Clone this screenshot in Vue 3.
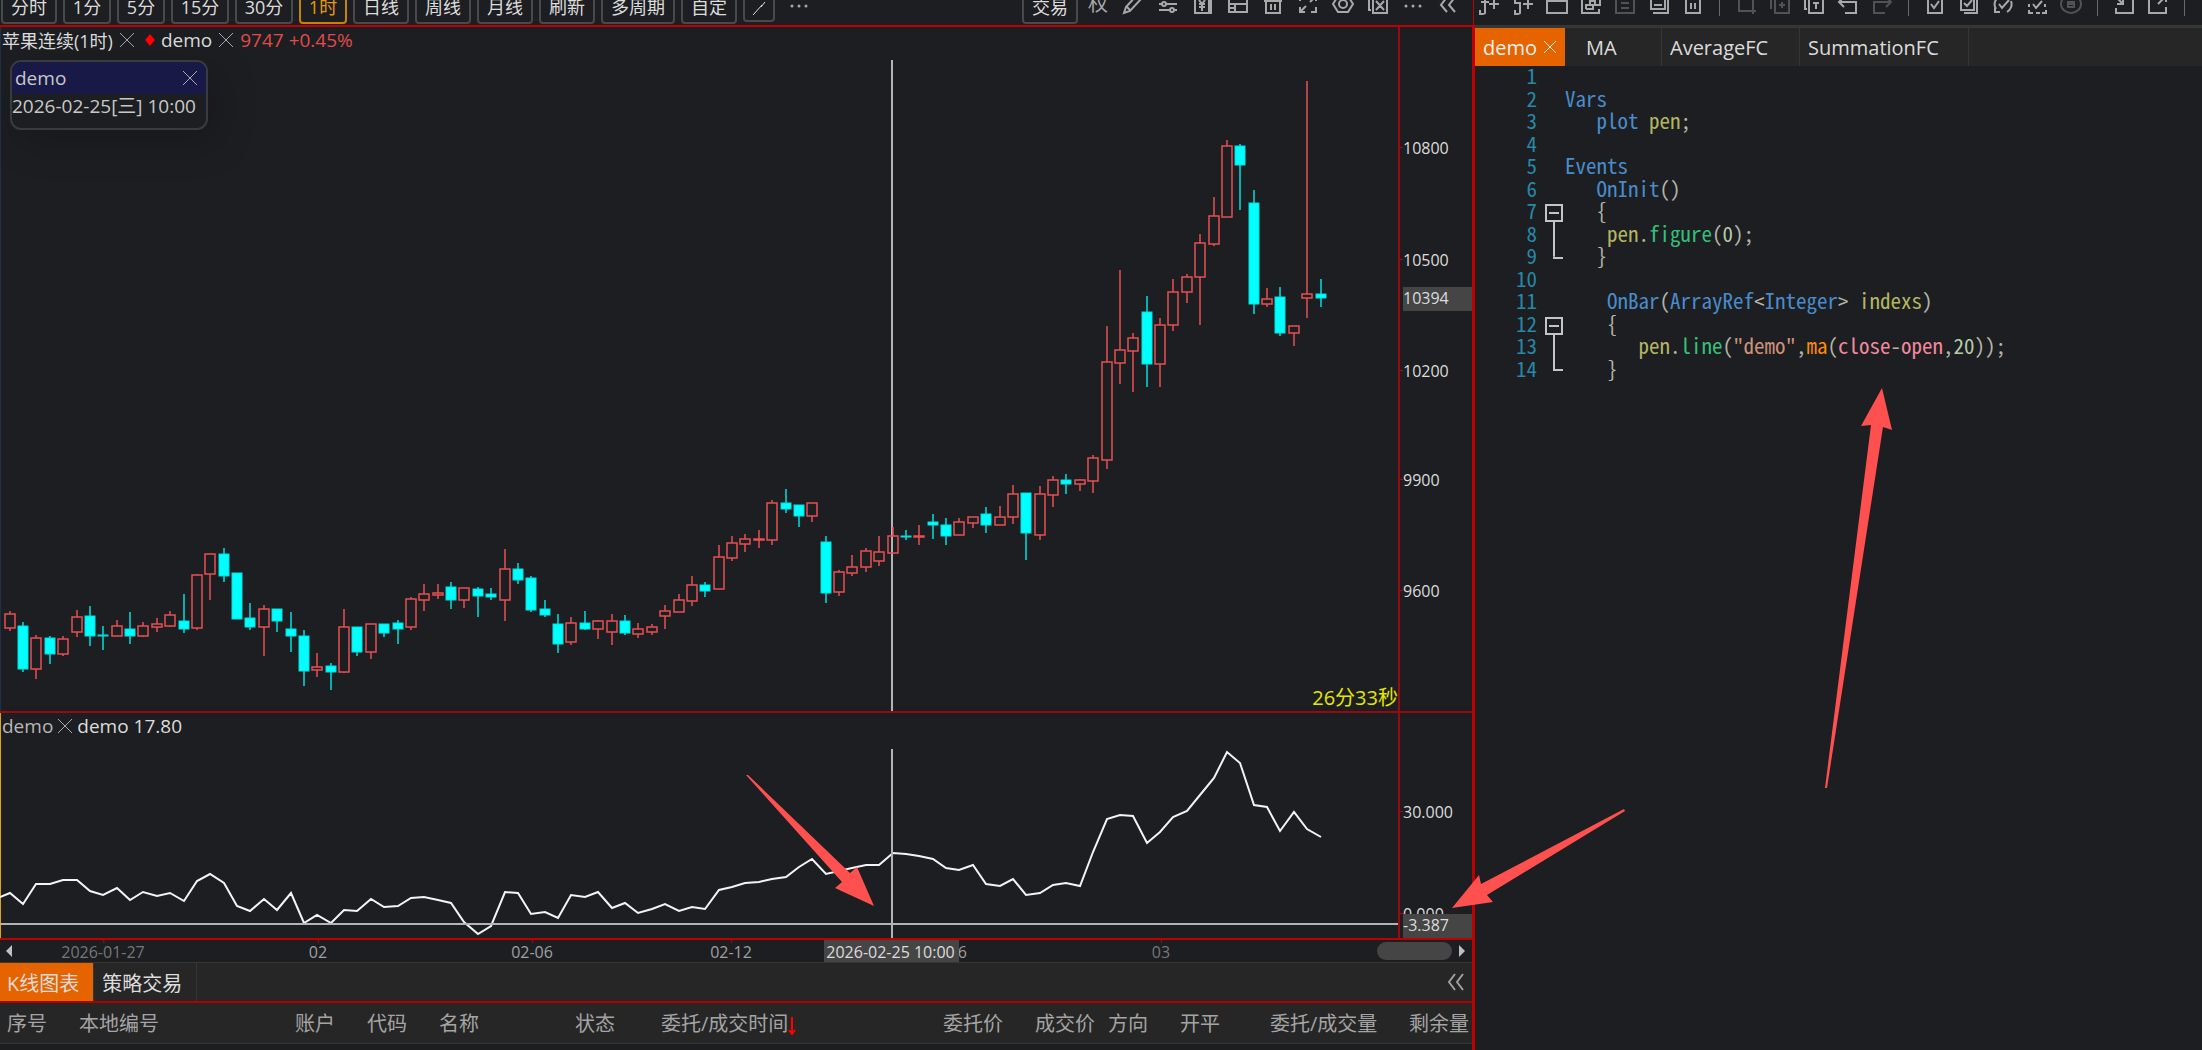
<template>
    <div class="terminal">
        <!-- Левая часть: график и таблица заявок -->
        <main class="left-side">
            <div class="toolbar">
                <div class="toolbar-inner chart-toolbar">
                    <button
                        v-for="item in periods"
                        :key="item"
                        type="button"
                        :class="['period-button', periodSize(item), { active: item === activePeriod }]"
                        @click="activePeriod = item"
                    >{{ item }}</button>
                    <button type="button" class="period-button draw-button" aria-label="画线">
                        <svg width="16" height="16" viewBox="0 0 16 16"><path d="M2 15 11 5M10 7l4-5" /></svg>
                    </button>
                    <button type="button" class="icon-button more-button" aria-label="更多">
                        <svg viewBox="0 0 24 24"><path class="dots" d="M5 14h0M12 14h0M19 14h0" /></svg>
                    </button>
                    <span class="spacer"></span>
                    <button type="button" class="period-button">交易</button>
                    <div class="icon-group">
                        <button type="button" class="icon-button text-icon">权</button>
                        <button v-for="icon in chartIcons" :key="icon.name" type="button" class="icon-button" :aria-label="icon.name">
                            <svg viewBox="0 0 24 24"><path :class="{ dots: icon.dots }" :d="icon.d" /></svg>
                        </button>
                    </div>
                </div>
            </div>

            <div class="left-body">
                <section class="price-pane">
                    <div class="plot">
                        <svg class="plot-svg" viewBox="0 27 1398 684" preserveAspectRatio="none">
                            <path class="cross" d="M892 60V711" />
                            <g v-for="(c, i) in candles" :key="i" :class="c[4] ? 'up' : 'down'">
                                <path class="wick" :d="`M${barX(i)} ${c[0]}V${c[1]}M${barX(i)} ${c[2]}V${c[3]}`" />
                                <rect :x="barX(i) - 5" :y="c[1]" width="10" :height="Math.max(c[2] - c[1], 1)" />
                            </g>
                        </svg>
                        <div class="pane-title">
                            <span class="contract">苹果连续(1时)</span>
                            <button type="button" class="close-button" aria-label="关闭"><svg viewBox="0 0 16 16"><path d="M1 1 15 15M15 1 1 15" /></svg></button>
                            <svg class="diamond" viewBox="0 0 10 12"><path d="M5 0 10 6 5 12 0 6z" /></svg>
                            <span>demo</span>
                            <button type="button" class="close-button" aria-label="关闭"><svg viewBox="0 0 16 16"><path d="M1 1 15 15M15 1 1 15" /></svg></button>
                            <span class="rise">9747 +0.45%</span>
                        </div>
                        <div class="info-box">
                            <div class="info-head">
                                <span>demo</span>
                                <button type="button" class="close-button" aria-label="关闭"><svg viewBox="0 0 16 16"><path d="M1 1 15 15M15 1 1 15" /></svg></button>
                            </div>
                            <div class="info-date">2026-02-25[三] 10:00</div>
                        </div>
                        <span class="countdown">26分33秒</span>
                    </div>
                    <div class="axis">
                        <span v-for="p in priceLabels" :key="p.text" class="axis-label" :style="{ top: p.top + '%' }">{{ p.text }}</span>
                        <span class="axis-mark price-mark">10394</span>
                    </div>
                </section>

                <section class="indicator-pane">
                    <div class="plot">
                        <svg class="plot-svg" viewBox="0 713 1398 225" preserveAspectRatio="none">
                            <polyline class="series" :points="linePoints" />
                            <path class="cross" d="M892 749V938M0 924H1398" />
                        </svg>
                        <div class="pane-title">
                            <span class="muted">demo</span>
                            <button type="button" class="close-button" aria-label="关闭"><svg viewBox="0 0 16 16"><path d="M1 1 15 15M15 1 1 15" /></svg></button>
                            <span>demo 17.80</span>
                        </div>
                    </div>
                    <div class="axis">
                        <span v-for="p in valueLabels" :key="p.text" class="axis-label" :style="{ top: p.top + '%' }">{{ p.text }}</span>
                        <span class="axis-mark value-mark">-3.387</span>
                    </div>
                </section>

                <div class="time-axis">
                    <button type="button" class="scroll-arrow" aria-label="向左"><svg viewBox="0 0 8 12"><path d="M7 0V12L1 6z" /></svg></button>
                    <span
                        v-for="t in timeLabels"
                        :key="t.text"
                        :class="['time-label', { dim: t.dim }]"
                        :style="{ left: t.left + '%' }"
                    >{{ t.text }}</span>
                    <span class="time-mark">2026-02-25 10:00</span>
                    <span class="spacer"></span>
                    <span class="scroll-thumb"></span>
                    <button type="button" class="scroll-arrow" aria-label="向右"><svg viewBox="0 0 8 12"><path d="M1 0V12L7 6z" /></svg></button>
                </div>

                <nav class="bottom-tabs">
                    <button type="button" class="bottom-tab active">K线图表</button>
                    <button type="button" class="bottom-tab">策略交易</button>
                    <span class="spacer"></span>
                    <button type="button" class="fold-button" aria-label="收起">
                        <svg viewBox="0 0 24 24"><path d="M11 4 5 12l6 8M19 4l-6 8 6 8" /></svg>
                    </button>
                </nav>

                <table class="orders">
                    <colgroup>
                        <col v-for="c in columns" :key="c.title" :style="{ width: c.width / 14.72 + '%' }">
                    </colgroup>
                    <thead>
                        <tr>
                            <th v-for="c in columns" :key="c.title" scope="col">
                                {{ c.title }}<svg v-if="c.sorted" class="sort-arrow" viewBox="0 0 8 18"><path d="M4 0V17M1 13l3 4 3-4" /></svg>
                            </th>
                        </tr>
                    </thead>
                </table>
            </div>
        </main>

        <!-- Правая часть: редактор формул -->
        <section class="right-side">
            <div class="toolbar editor-bar">
                <div class="toolbar-inner editor-toolbar">
                    <template v-for="(icon, i) in editorIcons" :key="i">
                        <span v-if="icon.sep" class="separator"></span>
                        <button v-else type="button" :class="['icon-button', { disabled: icon.off }]" :aria-label="icon.name">
                            <svg viewBox="0 0 24 24"><path :d="icon.d" /></svg>
                        </button>
                    </template>
                </div>
            </div>
            <nav class="file-tabs">
                <button type="button" class="file-tab current">
                    demo
                    <svg viewBox="0 0 16 16"><path d="M2 2 14 14M14 2 2 14" /></svg>
                </button>
                <button type="button" class="file-tab short">MA</button>
                <button type="button" class="file-tab average">AverageFC</button>
                <button type="button" class="file-tab summation">SummationFC</button>
            </nav>
            <div class="code">
                <div v-for="(line, i) in codeLines" :key="i" class="code-line">
                    <span class="line-number">{{ i + 1 }}</span>
                    <span :class="['fold', foldClass(i + 1)]"></span>
                    <code><span v-for="(t, j) in line" :key="j" :class="t[0]">{{ t[1] }}</span></code>
                </div>
            </div>
        </section>

        <!-- Стрелки-пометки поверх окна -->
        <svg class="arrows" viewBox="0 0 2202 1050" preserveAspectRatio="none">
            <path d="M746 775 748 775 850 873 857 867 874 906 835 888 842 882z" />
            <path d="M1624 809 1625 811 1487 895 1493 902 1452 908 1479 875 1481 884z" />
            <path d="M1825 788 1871 425 1861 426 1882 388 1892 430 1883 427 1827 788z" />
        </svg>
    </div>
</template>

<script setup>
import { ref, computed } from 'vue';

const activePeriod = ref('1时');
const periods = ['分时', '1分', '5分', '15分', '30分', '1时', '日线', '周线', '月线', '刷新', '多周期', '自定'];

// Ширина кнопки зависит от числа цифр в названии периода
function periodSize(item) {
    const digits = item.replace(/\D/g, '').length;
    return ['', 'one-digit', 'two-digits'][digits];
}

// Иконки панели графика
const chartIcons = [
    { name: '画笔', d: 'M3 21l2-6L16 3l4 4L9 19zM6 15l3 3' },
    { name: '参数', d: 'M3 12h3M10 12h11M3 18h11M18 18h3M6 12a2 2 0 1 0 4 0a2 2 0 1 0-4 0M14 18a2 2 0 1 0 4 0a2 2 0 1 0-4 0M3 6h11M18 6h3' },
    { name: '资金', d: 'M4 4h14v17H4zM8 8l3 4 3-4M11 12v7M8 12h6M8 15h6M20 6v15h-4' },
    { name: '布局', d: 'M3 4h18v16H3zM3 12h18M9 12v8M3 16h6' },
    { name: '删除', d: 'M3 9h18M5 9v12h14V9M10 12v6M14 12v6M9 5h6' },
    { name: '全屏', d: 'M4 9V4h5M15 4h5v5M20 15v5h-5M9 20H4v-5M14 10l5-5M10 14l-5 5' },
    { name: '设置', d: 'M7 4h10l5 8-5 8H7L2 12zM8 12a4 4 0 1 0 8 0a4 4 0 1 0-8 0' },
    { name: '关闭全部', d: 'M7 6h14v15H7zM10 9l8 9M18 9l-8 9M3 3v15h2' },
    { name: '更多', d: 'M5 14h0M12 14h0M19 14h0', dots: true },
    { name: '收起', d: 'M11 5 5 13l6 7M19 5l-6 8 6 7' },
];

// Иконки панели редактора
const editorIcons = [
    { name: '新建函数', d: 'M11 3H8v18c0 1-3 1-5 1v-4M4 10h8M12 12h10M17 7v10' },
    { name: '新建指标', d: 'M4 4v7h5v10c0 1-3 1-5 1v-4M12 12h10M17 7v10' },
    { name: '窗口', d: 'M2 5h20v16H2zM2 9h20' },
    { name: '链接', d: 'M9 6H3v15h17v-4M7 17h7v-4h-3M21 4v9h-5v-4h-5v4h-4v4' },
    { name: '文档', d: 'M3 4h18v17H3zM8 11h8M8 16h8', off: true },
    { name: '保存全部', d: 'M4 4h14v13H4zM7 13h8M21 4v17H6' },
    { name: '删除', d: 'M3 6h18M5 6v15h14V6M10 11v6M14 11v6' },
    { sep: true },
    { name: '选区', d: 'M5 3v16h17M19 22V5H3', off: true },
    { name: '添加', d: 'M7 5h14v16H7zM11 13h6M14 10v6M3 3v14', off: true },
    { name: '文本', d: 'M7 6h14v15H7zM11 11h6M14 11v6M3 3v14h2' },
    { name: '撤销', d: 'M4 10h16v11H9M8 5l-5 5 5 5' },
    { name: '重做', d: 'M20 10H4v11h11M16 5l5 5-5 5', off: true },
    { sep: true },
    { name: '检查', d: 'M5 4h14v17H5zM8 12l3 4 5-7' },
    { name: '检查全部', d: 'M4 4h13v14H4zM7 11l3 3 5-6M20 4v17H7' },
    { name: '编译', d: 'M9 20H4v-4M5 17a9 9 0 0 1 11-13M16 20a9 9 0 0 0 4-11M8 12l3 4 7-8' },
    { name: '部分检查', d: 'M4 8V4h4M16 4h4v4M4 12v3M20 12v3M4 18v3h4M11 21h4M17 21h4v-3M8 12l3 4 6-7' },
    { name: '停止', d: 'M2 12a10 9 0 1 0 20 0a10 9 0 1 0-20 0M9 10h6v5H9zM10 12h4', off: true },
    { sep: true },
    { name: '导入', d: 'M11 4h10v17H4v-5M3 4l8 8M11 6v6H5' },
    { name: '导出', d: 'M12 4H3v17h17v-6M12 12l8-8M14 4h6v6' },
    { sep: true },
];

// Свечи: [максимум, верх тела, низ тела, минимум, рост]
const candles = [
    [611, 614, 628, 631, 1], [622, 626, 669, 672, 0], [635, 638, 669, 679, 1], [636, 638, 654, 664, 0], [636, 639, 654, 656, 1],
    [610, 617, 632, 637, 1], [606, 616, 636, 646, 0], [626, 635, 636, 650, 0], [620, 626, 636, 636, 1], [612, 629, 636, 644, 0],
    [622, 626, 636, 637, 1], [618, 624, 627, 632, 1], [611, 615, 626, 627, 1], [594, 621, 629, 633, 0], [574, 575, 628, 630, 1],
    [554, 554, 574, 600, 1], [548, 554, 576, 582, 0], [573, 573, 619, 619, 0], [603, 618, 627, 630, 0], [605, 609, 627, 656, 1],
    [609, 609, 621, 632, 0], [612, 629, 636, 652, 0], [630, 636, 671, 686, 0], [653, 667, 670, 677, 1], [663, 666, 672, 690, 0],
    [609, 627, 672, 673, 1], [627, 627, 652, 656, 0], [624, 624, 652, 659, 1], [624, 624, 633, 637, 0], [620, 623, 629, 644, 0],
    [597, 599, 627, 630, 1], [584, 594, 600, 611, 1], [584, 593, 595, 599, 1], [582, 587, 600, 609, 0], [588, 588, 600, 608, 1],
    [587, 589, 596, 617, 0], [588, 594, 597, 600, 0], [549, 569, 600, 621, 1], [563, 569, 580, 584, 0], [576, 578, 610, 612, 0],
    [600, 609, 615, 617, 0], [614, 624, 644, 653, 0], [617, 623, 642, 645, 1], [611, 623, 629, 630, 0], [620, 621, 629, 639, 1],
    [614, 621, 632, 645, 1], [615, 621, 633, 635, 0], [623, 629, 634, 638, 1], [624, 627, 632, 635, 1], [605, 611, 616, 629, 1],
    [594, 600, 612, 612, 1], [576, 585, 601, 606, 1], [582, 585, 591, 597, 0], [545, 557, 589, 589, 1], [536, 543, 558, 561, 1],
    [534, 539, 544, 552, 1], [530, 539, 540, 548, 1], [500, 503, 540, 545, 1], [489, 503, 509, 513, 0], [505, 505, 516, 527, 0],
    [503, 503, 516, 522, 1], [536, 542, 593, 603, 0], [570, 572, 592, 596, 1], [555, 567, 573, 576, 1], [548, 551, 567, 572, 1],
    [536, 552, 561, 566, 1], [527, 536, 553, 553, 1], [530, 536, 537, 540, 0], [525, 536, 537, 545, 1], [514, 522, 525, 539, 0],
    [518, 525, 536, 545, 0], [518, 522, 535, 535, 1], [517, 517, 523, 528, 1], [507, 514, 525, 533, 0], [506, 517, 525, 525, 1],
    [485, 494, 517, 524, 1], [493, 493, 533, 560, 0], [486, 494, 535, 540, 1], [476, 480, 495, 507, 1], [474, 480, 484, 494, 0],
    [479, 480, 484, 491, 1], [455, 458, 481, 493, 1], [326, 362, 460, 469, 1], [270, 350, 363, 384, 1], [333, 338, 351, 392, 1],
    [296, 312, 364, 387, 0], [318, 325, 364, 387, 1], [279, 292, 325, 331, 1], [274, 277, 292, 303, 1], [234, 243, 277, 325, 1],
    [197, 216, 244, 246, 1], [140, 146, 217, 217, 1], [144, 146, 165, 210, 0], [190, 203, 304, 314, 0], [288, 299, 304, 307, 1],
    [287, 297, 333, 336, 0], [326, 326, 333, 346, 1], [81, 294, 298, 318, 1], [279, 294, 298, 307, 0],
];

// Значения индикатора по тем же барам
const series = [
    893, 904, 884, 884, 880, 880, 891, 895, 888, 900, 892, 896, 893, 901, 881, 874, 883, 906, 911, 899,
    910, 893, 923, 915, 923, 910, 911, 899, 907, 906, 898, 897, 900, 903, 922, 934, 926, 892, 893, 914,
    912, 918, 895, 897, 892, 908, 903, 913, 909, 904, 911, 907, 909, 890, 887, 883, 882, 879, 877, 867,
    859, 874, 871, 868, 865, 865, 853, 854, 856, 859, 868, 870, 865, 884, 886, 879, 895, 893, 885, 883,
    886, 852, 819, 815, 816, 843, 832, 817, 811, 795, 778, 752, 763, 805, 807, 831, 812, 829, 837,
];

function barX(i) {
    return Math.round(9.7 + i * 13.376);
}

const linePoints = computed(() => '0,897 ' + series.map((y, i) => `${barX(i)},${y}`).join(' '));

// Подписи шкал, положение в процентах высоты панели
const priceLabels = [
    { text: '10800', y: 148 }, { text: '10500', y: 260 }, { text: '10200', y: 371 },
    { text: '9900', y: 480 }, { text: '9600', y: 591 },
].map(p => ({ text: p.text, top: (p.y - 27) / 6.84 }));

const valueLabels = [{ text: '30.000', y: 812 }, { text: '0.000', y: 914 }]
    .map(p => ({ text: p.text, top: (p.y - 713) / 2.25 }));

const timeLabels = [
    { text: '2026-01-27', x: 103, dim: true }, { text: '02', x: 318 }, { text: '02-06', x: 532 },
    { text: '02-12', x: 731 }, { text: '02-26', x: 946 }, { text: '03', x: 1161, dim: true },
].map(t => ({ ...t, left: t.x / 14.72 }));

const columns = [
    { title: '序号', width: 72 },
    { title: '本地编号', width: 216 },
    { title: '账户', width: 72 },
    { title: '代码', width: 72 },
    { title: '名称', width: 136 },
    { title: '状态', width: 86 },
    { title: '委托/成交时间', width: 282, sorted: true },
    { title: '委托价', width: 92 },
    { title: '成交价', width: 73 },
    { title: '方向', width: 72 },
    { title: '开平', width: 90 },
    { title: '委托/成交量', width: 139 },
    { title: '剩余量', width: 70 },
];

// Строки кода: [класс подсветки, текст]
const codeLines = [
    [],
    [['kw', 'Vars']],
    [['kw', '   plot '], ['id', 'pen'], ['pt', ';']],
    [],
    [['kw', 'Events']],
    [['kw', '   OnInit'], ['pt', '()']],
    [['pt', '   {']],
    [['id', '    pen'], ['pt', '.'], ['fn', 'figure'], ['pt', '('], ['num', '0'], ['pt', ');']],
    [['pt', '   }']],
    [],
    [['kw', '    OnBar'], ['pt', '('], ['kw', 'ArrayRef'], ['pt', '<'], ['kw', 'Integer'], ['pt', '> '], ['id', 'indexs'], ['pt', ')']],
    [['pt', '    {']],
    [['id', '       pen'], ['pt', '.'], ['fn', 'line'], ['pt', '('], ['str', '"demo"'], ['pt', ','], ['ma', 'ma'], ['pt', '('],
        ['var', 'close'], ['pt', '-'], ['var', 'open'], ['pt', ','], ['num', '20'], ['pt', '));']],
    [['pt', '    }']],
];

function foldClass(n) {
    if (n === 7 || n === 12) return 'fold-start';
    if (n === 8 || n === 13) return 'fold-mid';
    if (n === 9 || n === 14) return 'fold-end';
    return '';
}
</script>

<style>
body {
    margin: 0;
    background: #1c1e21;
}
</style>

<style scoped>
.terminal {
    position: relative;
    display: grid;
    grid-template-columns: 1475fr 727fr;
    min-height: 100vh;
    overflow: hidden;
    color: #dcdcdc;
    background: #1c1e21;
    font-family: "Open Sans", "Noto Sans CJK SC", sans-serif;
    font-size: 18px;
}

button {
    margin: 0;
    padding: 0;
    border: none;
    background: none;
    color: inherit;
    font: inherit;
    white-space: nowrap;
    cursor: pointer;
}

svg {
    display: block;
    fill: none;
    stroke: currentColor;
}

.spacer {
    flex: 1;
}

.left-side,
.right-side {
    display: flex;
    flex-direction: column;
    min-width: 0;
}

/* Панели инструментов */
.toolbar {
    border-bottom: 2px solid #c00000;
}

.toolbar-inner {
    display: flex;
    align-items: flex-end;
    height: 25px;
    overflow: hidden;
}

.chart-toolbar {
    gap: 6px;
    margin-right: 1px;
    padding: 0 13px 0 1px;
    border-right: 1px solid #c00000;
}

.period-button {
    box-sizing: border-box;
    flex: none;
    height: 34px;
    margin-bottom: 1px;
    padding: 0 8px;
    border: 2px solid #48494b;
    border-radius: 4px;
    line-height: 30px;
}

.period-button.one-digit {
    width: 48px;
    padding: 0;
}

.period-button.two-digits {
    width: 58px;
    padding: 0;
}

.period-button.active {
    border-color: #c88400;
    color: #e89a00;
}

.draw-button {
    height: 32px;
    margin-bottom: 3px;
    padding: 8px 6px 4px;
}

.icon-group {
    display: flex;
    gap: 11px;
    margin-left: 2px;
}

.icon-button {
    flex: none;
    width: 24px;
    height: 24px;
    margin-bottom: 9px;
    color: #a8a8a8;
}

.icon-button svg {
    width: 24px;
    height: 24px;
    stroke-width: 2;
}

.icon-button .dots {
    stroke-width: 3;
    stroke-linecap: round;
}

.icon-button.disabled {
    color: #505254;
}

.text-icon {
    font-size: 20px;
    line-height: 24px;
}

.more-button {
    margin-left: 6px;
}

.editor-bar {
    border-bottom: 3px solid #363636;
}

.editor-toolbar {
    gap: 10px;
    padding-left: 2px;
}

.separator {
    flex: none;
    width: 1px;
    height: 24px;
    margin: 0 4px 9px;
    background: #6a6a6a;
}

/* График */
.left-body {
    display: flex;
    flex: 1;
    flex-direction: column;
    border-right: 3px solid #c00000;
}

.price-pane,
.indicator-pane {
    display: flex;
    min-height: 0;
    border-bottom: 2px solid #980a0f;
}

.price-pane {
    flex: 684 1 0;
}

.indicator-pane {
    flex: 225 1 0;
    border-bottom-color: #c00000;
}

.plot {
    position: relative;
    flex: 1;
    box-shadow: inset 1px 0 #1b3148;
}

.indicator-pane .plot {
    box-shadow: inset 1px 0 #e0a020;
}

.plot-svg {
    position: absolute;
    width: 100%;
    height: 100%;
}

.cross {
    stroke: #b4b4b4;
    stroke-width: 2;
}

.series {
    stroke: #f4f4f4;
    stroke-width: 2;
}

.wick {
    stroke-width: 1.5;
}

.up {
    stroke: #e65053;
    stroke-width: 1.5;
}

.down {
    fill: #00ffff;
    stroke: #00e0e0;
}

.pane-title {
    position: relative;
    display: flex;
    align-items: center;
    gap: 6px;
    height: 25px;
    padding-left: 2px;
    font-size: 19px;
}

.indicator-pane .pane-title {
    gap: 4px;
}

.contract {
    font-size: 18px;
}

.muted {
    color: #b8b8b8;
}

.rise {
    color: #e04c4c;
}

.close-button {
    width: 16px;
    height: 16px;
    color: #a8a8a8;
}

.close-button svg {
    width: 16px;
    height: 16px;
}

.diamond {
    width: 10px;
    height: 12px;
    margin-left: 4px;
    fill: #ff0000;
    stroke: none;
}

.info-box {
    position: absolute;
    top: 33px;
    left: 10px;
    box-sizing: border-box;
    width: 198px;
    height: 70px;
    overflow: hidden;
    border: 2px solid #393b3f;
    border-radius: 11px;
    background: #1c1e21;
    box-shadow: 10px 12px 40px rgba(0, 0, 0, 0.2);
    color: #c8c8c8;
    font-size: 19px;
}

.info-head {
    display: flex;
    align-items: center;
    justify-content: space-between;
    height: 32px;
    padding: 0 8px 0 3px;
    background: #191947;
}

.info-date {
    line-height: 24px;
    white-space: nowrap;
}

.countdown {
    position: absolute;
    right: 0;
    bottom: 0;
    color: #e6e600;
    font-size: 20px;
    line-height: 27px;
}

.axis {
    position: relative;
    box-sizing: border-box;
    width: 74px;
    border-left: 2px solid #980a0f;
    font-size: 16px;
}

.axis-label {
    position: absolute;
    left: 0;
    padding-left: 3px;
    line-height: 22px;
    transform: translateY(-50%);
}

.axis-label::before {
    content: "";
    position: absolute;
    top: 10px;
    left: 0;
    width: 3px;
    height: 1px;
    background: #c00000;
}

.axis-mark {
    position: absolute;
    right: 0;
    left: 3px;
    padding-bottom: 2px;
    background: #454545;
    line-height: 22px;
}

.price-mark {
    top: 38%;
}

.value-mark {
    bottom: 0;
}

.time-axis {
    position: relative;
    display: flex;
    align-items: center;
    height: 22px;
    padding: 0 3px 0 2px;
    border-bottom: 1px solid #363636;
    font-size: 16px;
}

.time-label {
    position: absolute;
    top: 0;
    color: #a0a0a0;
    line-height: 24px;
    transform: translateX(-50%);
}

.time-label.dim {
    color: #777777;
}

.time-label::before {
    content: "";
    position: absolute;
    top: 0;
    left: 50%;
    width: 1px;
    height: 3px;
    background: #c00000;
}

.time-mark {
    position: absolute;
    top: 0;
    left: 56%;
    height: 22px;
    padding: 0 4px 0 2px;
    background: #454545;
    line-height: 24px;
}

.scroll-arrow {
    width: 14px;
    height: 12px;
    padding: 0 3px;
}

.scroll-arrow svg {
    width: 8px;
    height: 12px;
    fill: #c0c0c0;
    stroke: none;
}

.scroll-thumb {
    width: 75px;
    height: 18px;
    margin-right: 3px;
    border-radius: 9px;
    background: #454545;
}

/* Нижние вкладки и таблица */
.bottom-tabs {
    display: flex;
    height: 38px;
    border-bottom: 2px solid #b00000;
    background: #262626;
    font-size: 20px;
}

.bottom-tab {
    padding: 0 14px 0 8px;
    border-right: 1px solid #363636;
}

.bottom-tab.active {
    padding-left: 7px;
    background: #e66400;
}

.fold-button {
    width: 24px;
    margin-right: 4px;
    color: #a0a0a0;
}

.fold-button svg {
    width: 24px;
    height: 24px;
    stroke-width: 2;
}

.orders {
    width: 100%;
    margin-bottom: 6px;
    border-collapse: collapse;
    table-layout: fixed;
    background: #262626;
}

.orders th {
    height: 38px;
    padding: 2px 0 0 7px;
    border-bottom: 1px solid #363636;
    color: #a4a4a4;
    font-size: 20px;
    font-weight: normal;
    line-height: 28px;
    text-align: left;
    white-space: nowrap;
}

.sort-arrow {
    display: inline-block;
    width: 8px;
    height: 18px;
    color: #ff0000;
    stroke-width: 2;
    vertical-align: middle;
}

/* Редактор */
.file-tabs {
    display: flex;
    height: 38px;
    background: #262626;
    font-size: 20px;
}

.file-tab {
    box-sizing: border-box;
    padding: 0 28px 0 8px;
    border-right: 1px solid #363636;
    text-align: left;
}

.file-tab.current {
    display: flex;
    align-items: center;
    justify-content: space-between;
    width: 90px;
    padding: 0 7px 0 8px;
    border: none;
    background: #e66400;
    color: #f0f0f0;
}

.file-tab.current svg {
    width: 16px;
    height: 16px;
}

.file-tab.short {
    width: 97px;
    padding: 0 0 0 21px;
}

.file-tab.average {
    width: 138px;
}

.file-tab.summation {
    width: 169px;
}

.code {
    display: grid;
    grid-template-rows: repeat(14, 1fr);
    height: 315px;
    font-family: "Noto Sans Mono CJK SC", "Liberation Mono", monospace;
    font-size: 21px;
}

.code-line {
    display: grid;
    grid-template-columns: 62px 28px 1fr;
    align-items: start;
    line-height: 18px;
}

.line-number {
    color: #2788a8;
    text-align: right;
}

code {
    font-family: inherit;
    white-space: pre;
}

.fold {
    position: relative;
    align-self: stretch;
}

.fold-start::before {
    content: "";
    position: absolute;
    top: 3px;
    left: 8px;
    box-sizing: border-box;
    width: 18px;
    height: 18px;
    border: 2px solid #c4c4c4;
    background: linear-gradient(#c4c4c4, #c4c4c4) center / 10px 2px no-repeat;
}

.fold-start::after,
.fold-mid::before,
.fold-end::before {
    content: "";
    position: absolute;
    top: 0;
    bottom: 0;
    left: 16px;
    width: 2px;
    background: #c4c4c4;
}

.fold-start::after {
    top: 19px;
}

.fold-end::before {
    bottom: 10px;
    width: 10px;
    border-bottom: 2px solid #c4c4c4;
    background: linear-gradient(#c4c4c4, #c4c4c4) left / 2px 100% no-repeat;
}

.kw {
    color: #4a8ccb;
}

.id {
    color: #b4b662;
}

.pt {
    color: #b4b4a8;
}

.fn {
    color: #35c07a;
}

.num {
    color: #b5cea8;
}

.str {
    color: #ce9178;
}

.ma {
    color: #ff8c00;
}

.var {
    color: #f08a9c;
}

.arrows {
    position: absolute;
    width: 100%;
    height: 100%;
    fill: #ff5050;
    stroke: none;
    pointer-events: none;
}
</style>
